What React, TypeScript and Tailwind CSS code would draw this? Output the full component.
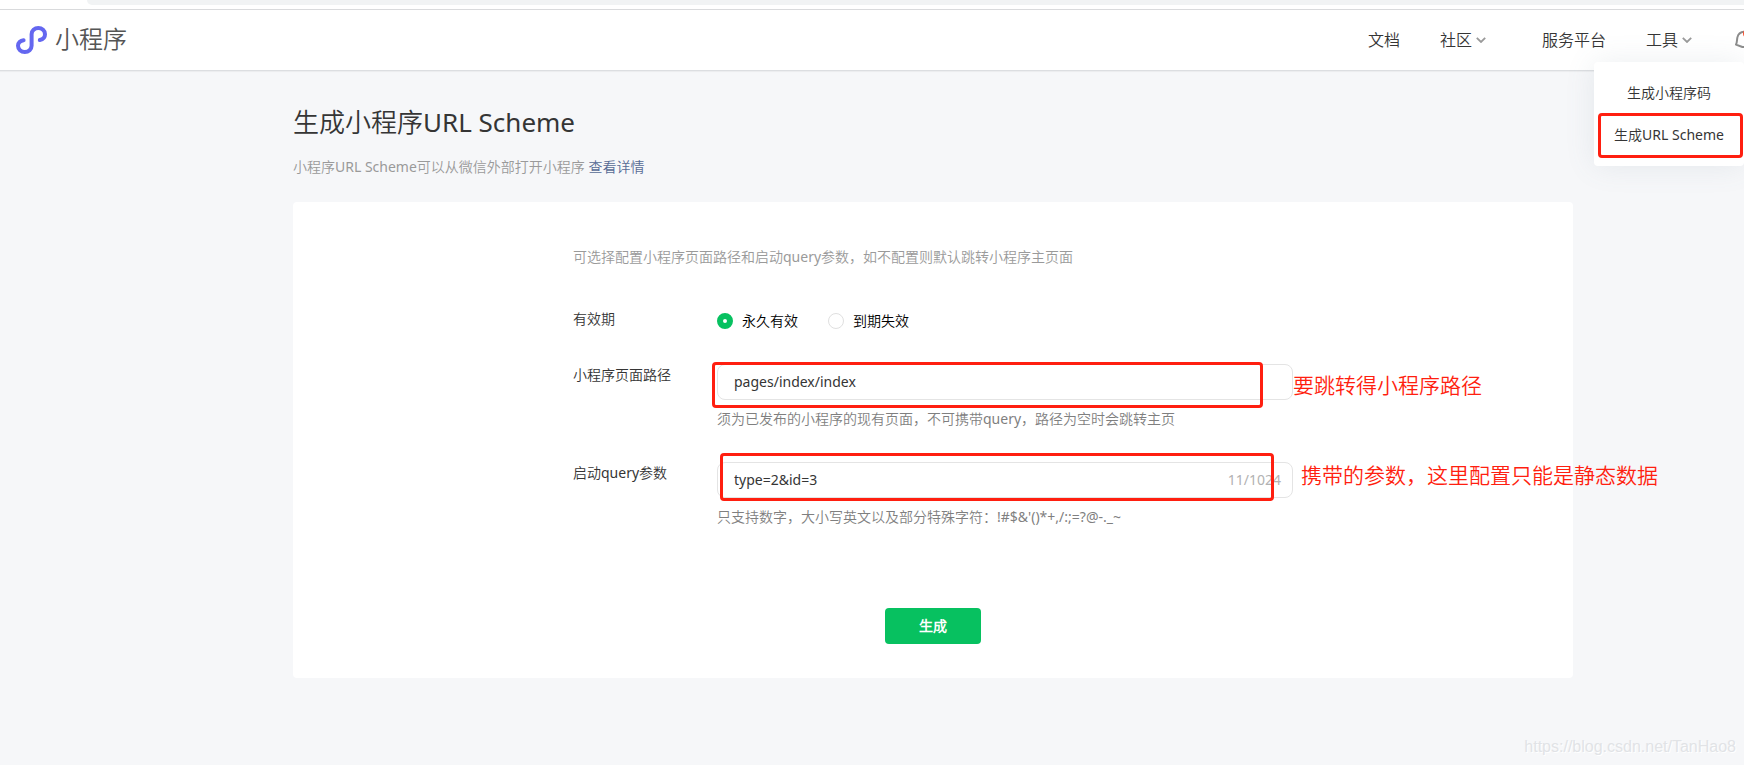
import { useState } from "react";
import type { ReactNode } from "react";

function Logo() {
  return (
    <svg viewBox="0 0 31 28" className="h-7 w-[31px]" fill="none" stroke="#6467f0" strokeWidth="4" strokeLinecap="round" aria-hidden="true">
      <path d="M7.6 14.2 C4.4 14.6 2 16.8 2 19.8 C2 23.2 5 26 8.8 26 C12.6 26 15.6 23.2 15.6 19.8 V8.2 C15.6 4.8 18.6 2 22.3 2 C26 2 29 4.8 29 8.2 C29 11.2 26.8 13.4 23.8 14" />
    </svg>
  );
}

function Chevron() {
  return (
    <svg viewBox="0 0 10 6" className="h-[6px] w-[10px]" fill="none" stroke="#9a9a9a" strokeWidth="1.8" aria-hidden="true">
      <path d="M0.8 0.8 L5 5 L9.2 0.8" />
    </svg>
  );
}

function Bell() {
  return (
    <svg viewBox="0 0 20 20" className="size-5 shrink-0" fill="none" aria-hidden="true">
      <path d="M1 14.6 C2.2 12.4 1.8 10 2.4 7.4 C3.2 4 6 1.8 10 1.8 C14 1.8 16.8 4 17.6 7.4 C18.2 10 17.8 12.4 19 14.6 L12.6 17 H7.4 Z" stroke="#8c8c8c" strokeWidth="2" strokeLinejoin="round" />
      <circle cx="12" cy="3.6" r="4" fill="#fa5130" />
    </svg>
  );
}

function Header() {
  return (
    <header className="relative border-b border-[#dcdee1] bg-white shadow-[0_1px_1px_rgba(0,0,0,0.04)]">
      <div className="ml-[87px] h-[5px] rounded-bl-lg bg-[#f1f3f4]" />
      <div className="mt-1 flex h-[61px] items-center justify-between border-t border-[#d9dadc] pl-4">
        <a href="#home" className="flex items-center gap-2 text-2xl leading-8 text-[#555]">
          <Logo />
          <span className="pb-0.5">小程序</span>
        </a>
        <nav className="flex items-center text-base text-[#353535]">
          <a href="#docs" className="mr-10">文档</a>
          <a href="#community" className="mr-14 flex items-center gap-1">社区<Chevron /></a>
          <a href="#platform" className="mr-10">服务平台</a>
          <a href="#tools" className="mr-[43px] flex items-center gap-1">工具<Chevron /></a>
          <button type="button" aria-label="通知" className="flex w-[9px] overflow-hidden">
            <Bell />
          </button>
        </nav>
      </div>
      <div className="absolute top-[62px] right-0 z-10 w-[150px] rounded bg-white py-[10px] text-center text-sm leading-[42px] text-[#353535] shadow-[0_0_30px_rgba(100,120,140,0.12)]">
        <a href="#qrcode" className="block">生成小程序码</a>
        <a href="#scheme" className="relative block">
          生成URL Scheme
          <span className="absolute -top-px right-px -bottom-0.5 left-1 rounded-sm border-3 border-[#ff1f10]" />
        </a>
      </div>
    </header>
  );
}

function Radio({ label, checked, onChange }: { label: string; checked: boolean; onChange: () => void }) {
  return (
    <label className="flex items-center gap-[9px] text-black">
      <input
        type="radio"
        name="validity"
        checked={checked}
        onChange={onChange}
        className="size-4 appearance-none rounded-full border border-[#e0e0e0] bg-white checked:border-6 checked:border-[#07c160]"
      />
      {label}
    </label>
  );
}

function Field({ id, label, hint, children }: { id: string; label: string; hint: string; children: ReactNode }) {
  return (
    <div className="flex">
      <label htmlFor={id} className="w-36 shrink-0 text-[#353535]">{label}</label>
      <div className="flex-1">
        <div className="relative">{children}</div>
        <p className="mt-2 text-[#7f7f7f]">{hint}</p>
      </div>
    </div>
  );
}

const inputStyle =
  "block h-9 w-full rounded-lg border border-[#e4e4e4] bg-white px-4 pb-0.5 text-sm text-[#353535] outline-none";

export default function App() {
  const [forever, setForever] = useState(true);
  const [path, setPath] = useState("pages/index/index");
  const [query, setQuery] = useState("type=2&id=3");

  return (
    <div className="relative min-h-screen overflow-x-hidden bg-[#f6f7f9] font-['Noto_Sans','Noto_Sans_CJK_SC_DemiLight','Noto_Sans_CJK_SC',sans-serif]">
      <Header />
      <main className="pt-[31px] pb-[87px] pl-[122px]">
        <div className="mx-auto max-w-[1280px]">
          <h1 className="text-[26px] leading-10 text-[#353535]">生成小程序URL Scheme</h1>
          <p className="mt-[14px] text-sm leading-[22px] text-[#9a9a9a]">
            小程序URL Scheme可以从微信外部打开小程序 <a href="#detail" className="text-[#576b95]">查看详情</a>
          </p>
          <form className="mt-6 rounded bg-white pt-11 pb-[34px] text-sm leading-[22px]" onSubmit={(e) => e.preventDefault()}>
            <div className="mx-auto max-w-[720px]">
              <p className="text-[#9a9a9a]">可选择配置小程序页面路径和启动query参数，如不配置则默认跳转小程序主页面</p>
              <div className="mt-10 flex">
                <span className="w-36 text-[#353535]">有效期</span>
                <div className="mt-0.5 flex gap-[30px]">
                  <Radio label="永久有效" checked={forever} onChange={() => setForever(true)} />
                  <Radio label="到期失效" checked={!forever} onChange={() => setForever(false)} />
                </div>
              </div>
              <div className="mt-8 flex flex-col gap-8">
                <Field id="path" label="小程序页面路径" hint="须为已发布的小程序的现有页面，不可携带query，路径为空时会跳转主页">
                  <input id="path" value={path} onChange={(e) => setPath(e.target.value)} className={inputStyle} />
                  <span className="pointer-events-none absolute -top-0.5 -left-[5px] h-[46px] w-[551px] rounded-sm border-3 border-[#ff1f10]" />
                  <span className="absolute top-[7px] left-full text-[21px] leading-7 font-[350] whitespace-nowrap text-[#ff1f10]">要跳转得小程序路径</span>
                </Field>
                <Field id="query" label="启动query参数" hint="只支持数字，大小写英文以及部分特殊字符：!#$&'()*+,/:;=?@-._~">
                  <input id="query" value={query} onChange={(e) => setQuery(e.target.value)} className={inputStyle} />
                  <span className="absolute top-[7px] right-3 text-[#b2b2b2]">{query.length}/1024</span>
                  <span className="pointer-events-none absolute -top-[9px] left-[3px] h-12 w-[554px] rounded-sm border-3 border-[#ff1f10]" />
                  <span className="absolute -top-px left-full ml-2 text-[21px] leading-7 font-[350] whitespace-nowrap text-[#ff1f10]">携带的参数，这里配置只能是静态数据</span>
                </Field>
              </div>
            </div>
            <button type="submit" className="mx-auto mt-20 block h-9 w-24 rounded bg-[#07c160] font-bold text-white">生成</button>
          </form>
        </div>
      </main>
      <p className="absolute right-2 bottom-[7px] font-['Liberation_Sans',sans-serif] text-base leading-[22px] text-[#e1e3e6] [text-shadow:1px_1px_0_#fff]">
        https://blog.csdn.net/TanHao8
      </p>
    </div>
  );
}
